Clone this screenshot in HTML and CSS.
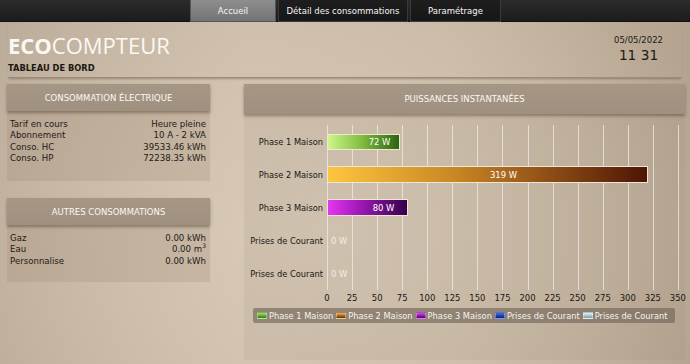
FILE: index.html
```html
<!DOCTYPE html>
<html lang="fr">
<head>
<meta charset="utf-8">
<title>EcoCompteur</title>
<link rel="stylesheet" href="styles.css">
</head>
<body>
<nav class="nav">
  <a class="tab tab-accueil active">Accueil</a>
  <a class="tab tab-detail">Détail des consommations</a>
  <a class="tab tab-param">Paramétrage</a>
</nav>
<header class="header">
  <div class="brand-row">
    <div class="brand">
      <h1 class="logo"><b>ECO</b>COMPTEUR</h1>
      <div class="subtitle">TABLEAU DE BORD</div>
    </div>
    <div class="clock">
      <div class="date">05/05/2022</div>
      <div class="time">11 31</div>
    </div>
  </div>
</header>
<main class="main">
  <div class="left">
    <section class="panel panel-elec">
      <div class="panel-head">CONSOMMATION ÉLECTRIQUE</div>
      <div class="panel-body">
        <div class="row"><span>Tarif en cours</span><span>Heure pleine</span></div>
        <div class="row"><span>Abonnement</span><span>10 A - 2 kVA</span></div>
        <div class="row"><span>Conso. HC</span><span>39533.46 kWh</span></div>
        <div class="row"><span>Conso. HP</span><span>72238.35 kWh</span></div>
      </div>
    </section>
    <section class="panel panel-autres">
      <div class="panel-head">AUTRES CONSOMMATIONS</div>
      <div class="panel-body">
        <div class="row"><span>Gaz</span><span>0.00 kWh</span></div>
        <div class="row"><span>Eau</span><span>0.00 m<sup>3</sup></span></div>
        <div class="row"><span>Personnalise</span><span>0.00 kWh</span></div>
      </div>
    </section>
  </div>
  <section class="panel panel-chart">
    <div class="panel-head chart-head">PUISSANCES INSTANTANÉES</div>
    <div class="chart">
      <div class="chart-grid">
        <div class="labels">
          <div class="cat">Phase 1 Maison</div>
          <div class="cat">Phase 2 Maison</div>
          <div class="cat">Phase 3 Maison</div>
          <div class="cat">Prises de Courant</div>
          <div class="cat">Prises de Courant</div>
        </div>
        <div class="plot">
          <div class="bar-row"><div class="bar bar-p1" style="width:73px"><span>72 W</span></div></div>
          <div class="bar-row"><div class="bar bar-p2" style="width:321px"><span>319 W</span></div></div>
          <div class="bar-row"><div class="bar bar-p3" style="width:81px"><span>80 W</span></div></div>
          <div class="bar-row"><div class="bar-zero">0 W</div></div>
          <div class="bar-row"><div class="bar-zero">0 W</div></div>
        </div>
      </div>
      <div class="axis">
        <span>0</span><span>25</span><span>50</span><span>75</span><span>100</span><span>125</span><span>150</span><span>175</span><span>200</span><span>225</span><span>250</span><span>275</span><span>300</span><span>325</span><span>350</span>
      </div>
      <div class="legend">
        <span class="leg"><i class="sw sw-p1"></i>Phase 1 Maison</span>
        <span class="leg"><i class="sw sw-p2"></i>Phase 2 Maison</span>
        <span class="leg"><i class="sw sw-p3"></i>Phase 3 Maison</span>
        <span class="leg"><i class="sw sw-pc1"></i>Prises de Courant</span>
        <span class="leg"><i class="sw sw-pc2"></i>Prises de Courant</span>
      </div>
    </div>
  </section>
</main>
</body>
</html>
```
FILE: styles.css
```css
* { box-sizing: border-box; }
html, body { margin: 0; padding: 0; }
body {
  width: 690px;
  height: 364px;
  overflow: hidden;
  font-family: "DejaVu Sans", sans-serif;
  color: #1e1a16;
  background:
    radial-gradient(ellipse 420px 300px at 330px 230px, rgba(222,208,190,0.75), rgba(222,208,190,0) 100%),
    linear-gradient(90deg, #bcad9a 0%, #cbbca9 35%, #c6b7a3 65%, #b3a38f 100%);
}
.cat, .bar, .bar-zero, .axis, .legend {
  font-family: "DejaVu Sans Condensed", "DejaVu Sans", sans-serif;
  font-stretch: condensed;
}

/* NAV */
.nav {
  height: 22px;
  display: flex;
  justify-content: center;
  padding-left: 3px;
  background: linear-gradient(#2c2c2c, #1c1c1c);
  border-bottom: 1px solid #111;
}
.tab {
  display: flex;
  align-items: center;
  justify-content: center;
  height: 22px;
  margin-right: 2px;
  color: #f6f6f6;
  font-size: 8.5px;
  background: linear-gradient(#1e1e1e, #161616);
  border: 1px solid #3a3a3a;
  border-top: none;
}
.tab-accueil { width: 86px; }
.tab-detail { width: 130px; }
.tab-param { width: 91px; }
.tab.active {
  background: linear-gradient(#8e8e8e, #737373);
  border-color: #555;
}

/* HEADER */
.header { padding: 0 8px; }
.brand-row {
  display: flex;
  justify-content: space-between;
  align-items: flex-start;
  padding-bottom: 4px;
  border-bottom: 1px solid #9c8c78;
  box-shadow: 0 2px 2px -1px rgba(60,45,30,0.35);
}
.logo {
  margin: 8px 0 0;
  font-family: "Open Sans", sans-serif;
  font-stretch: normal;
  font-weight: 400;
  font-size: 22px;
  line-height: 30px;
  color: #fbf8f4;
}
.logo b { font-weight: 700; }
.subtitle {
  margin-top: 3px;
  font-size: 8.3px;
  font-weight: 700;
  color: #1c1712;
}
.clock {
  margin: 13px 19px 0 0;
  text-align: center;
  color: #1e1a16;
}
.date { font-size: 8.5px; line-height: 11px; }
.time { font-size: 13.7px; line-height: 19px; }

/* MAIN */
.main {
  display: grid;
  grid-template-columns: 203px 441px;
  column-gap: 34px;
  padding-left: 7px;
  margin-top: 6px;
}
.left { display: flex; flex-direction: column; gap: 17px; }
.panel { background: rgba(150,128,104,0.22); }
.panel-head {
  height: 27px;
  display: flex;
  align-items: center;
  justify-content: center;
  background: linear-gradient(#a69684, #a09080);
  color: #fbf8f2;
  font-size: 8.5px;
  box-shadow: 0 2px 3px rgba(50,35,20,0.4);
  position: relative;
}
.panel-body {
  padding: 8px 4px 17px 3px;
  font-size: 8.6px;
  line-height: 11.3px;
}
.panel-autres .panel-body { padding-top: 8px; padding-bottom: 15px; }
.row { display: flex; justify-content: space-between; }
.row sup { font-size: 6px; vertical-align: 4px; line-height: 0; }

/* CHART */
.panel-chart { height: 276px; background: rgba(150,128,104,0.12); }
.chart-head { height: 30px; }
.chart { padding: 11px 0 0 0; }
.chart-grid { display: flex; }
.labels {
  width: 83px;
  flex: none;
  padding-right: 4px;
}
.cat {
  height: 33px;
  display: flex;
  align-items: center;
  justify-content: flex-end;
  font-size: 9.2px;
  white-space: nowrap;
  color: #1a1612;
}
.plot {
  width: 352px;
  background-image: repeating-linear-gradient(90deg, rgba(240,236,232,0.75) 0 1px, transparent 1px 25.07px);
}
.bar-row {
  height: 33px;
  display: flex;
  align-items: center;
}
.bar {
  height: 17px;
  border: 1px solid #efe6da;
  display: flex;
  align-items: center;
  justify-content: center;
  padding-left: 32px;
  color: #fff;
  font-size: 9.4px;
  white-space: nowrap;
}
.bar-p1 { background: linear-gradient(90deg, #cdf68a, #86c042 45%, #2b6410); height: 16px; }
.bar-p2 { background: linear-gradient(90deg, #fdc63e, #c98624 40%, #4e1406); }
.bar-p3 { background: linear-gradient(90deg, #e636f2, #9f19b6 40%, #34004a); }
.bar-zero {
  margin-left: 4px;
  color: #f2ece4;
  font-size: 9.4px;
}
.axis {
  display: flex;
  margin-left: 70.5px;
  height: 14px;
  align-items: center;
}
.axis span {
  width: 25.07px;
  text-align: center;
  font-size: 9.4px;
  color: #1a1612;
  flex: none;
}
.legend {
  margin: 4px 10px 0 9px;
  height: 15px;
  display: flex;
  align-items: center;
  gap: 3px;
  padding-left: 4px;
  background: rgba(112,98,86,0.62);
  border-radius: 2px;
  color: #f6f2ee;
  font-size: 9.2px;
  white-space: nowrap;
}
.leg { display: flex; align-items: center; }
.sw {
  display: inline-block;
  width: 10px;
  height: 7px;
  margin-right: 2px;
  border: 1px solid rgba(255,255,255,0.35);
}
.sw-p1 { background: linear-gradient(#a6e060, #2f7a14); }
.sw-p2 { background: linear-gradient(#f1b54a, #6a2a08); }
.sw-p3 { background: linear-gradient(#e040f0, #4a0070); }
.sw-pc1 { background: linear-gradient(#3a6ee8, #0a1e80); }
.sw-pc2 { background: linear-gradient(#e8f0f4, #7a9aa8); }
```
